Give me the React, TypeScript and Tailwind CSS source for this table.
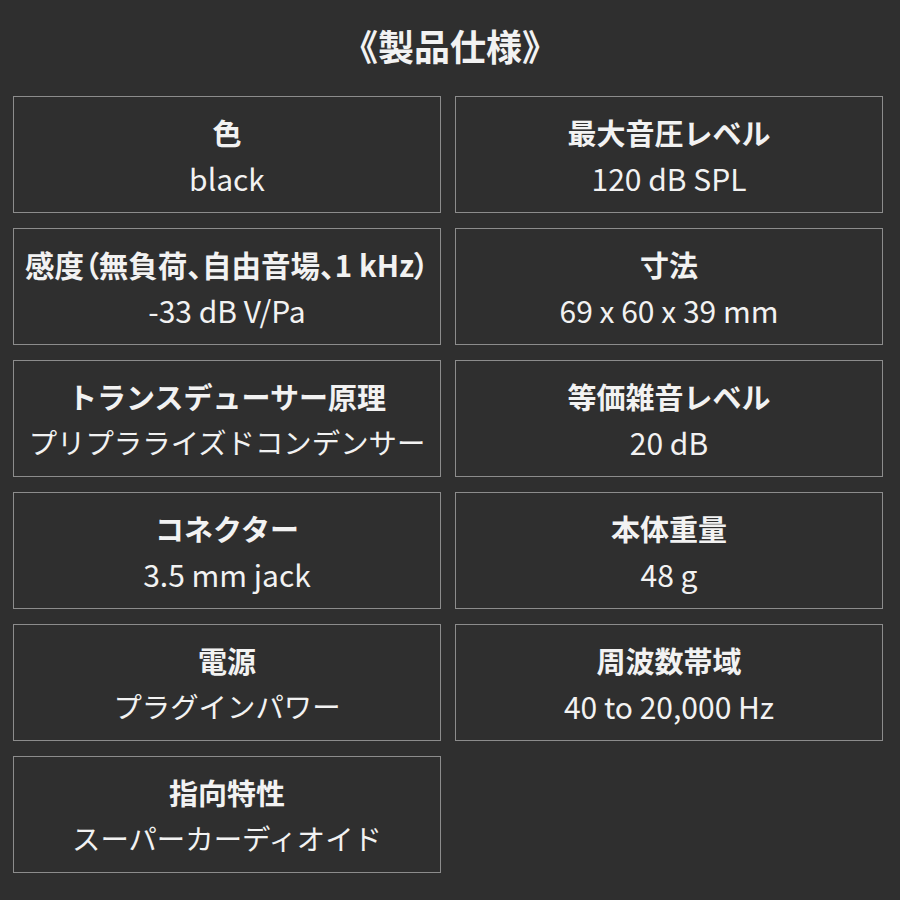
const specs = [
  { label: '色', value: 'black', latin: true },
  { label: '最大音圧レベル', value: '120 dB SPL', latin: true },
  { label: '感度（無負荷、自由音場、1 kHz）', value: '-33 dB V/Pa', latin: true, tight: true },
  { label: '寸法', value: '69 x 60 x 39 mm', latin: true },
  { label: 'トランスデューサー原理', value: 'プリプラライズドコンデンサー' },
  { label: '等価雑音レベル', value: '20 dB', latin: true },
  { label: 'コネクター', value: '3.5 mm jack', latin: true },
  { label: '本体重量', value: '48 g', latin: true },
  { label: '電源', value: 'プラグインパワー' },
  { label: '周波数帯域', value: '40 to 20,000 Hz', latin: true },
  { label: '指向特性', value: 'スーパーカーディオイド' },
];

export default function App() {
  return (
    <div
      className="w-[900px] h-[900px] bg-[#2f2f2f] text-[#f2f2f2] overflow-hidden"
      style={{ fontFamily: '"Noto Sans CJK JP", "Noto Sans", sans-serif' }}
    >
      <h1 className="pt-[24px] h-[96px] text-center text-[36px] font-bold leading-[42px]">《製品仕様》</h1>
      <div className="grid grid-cols-[428px_428px] gap-x-[14px] gap-y-[15px] pl-[13px]">
        {specs.map((s) => (
          <div
            key={s.label}
            className="h-[117px] border border-[#8c8c8c] flex flex-col items-center justify-center"
          >
            <div
              className={
                s.tight
                  ? "text-[29.5px] font-bold leading-[46px] whitespace-nowrap [font-feature-settings:'palt']"
                  : 'text-[29px] font-bold leading-[46px] whitespace-nowrap'
              }
            >
              {s.label}
            </div>
            <div
              className={
                s.latin
                  ? 'text-[30px] leading-[46px] whitespace-nowrap'
                  : 'text-[28.4px] leading-[46px] whitespace-nowrap'
              }
            >
              {s.value}
            </div>
          </div>
        ))}
      </div>
    </div>
  );
}
